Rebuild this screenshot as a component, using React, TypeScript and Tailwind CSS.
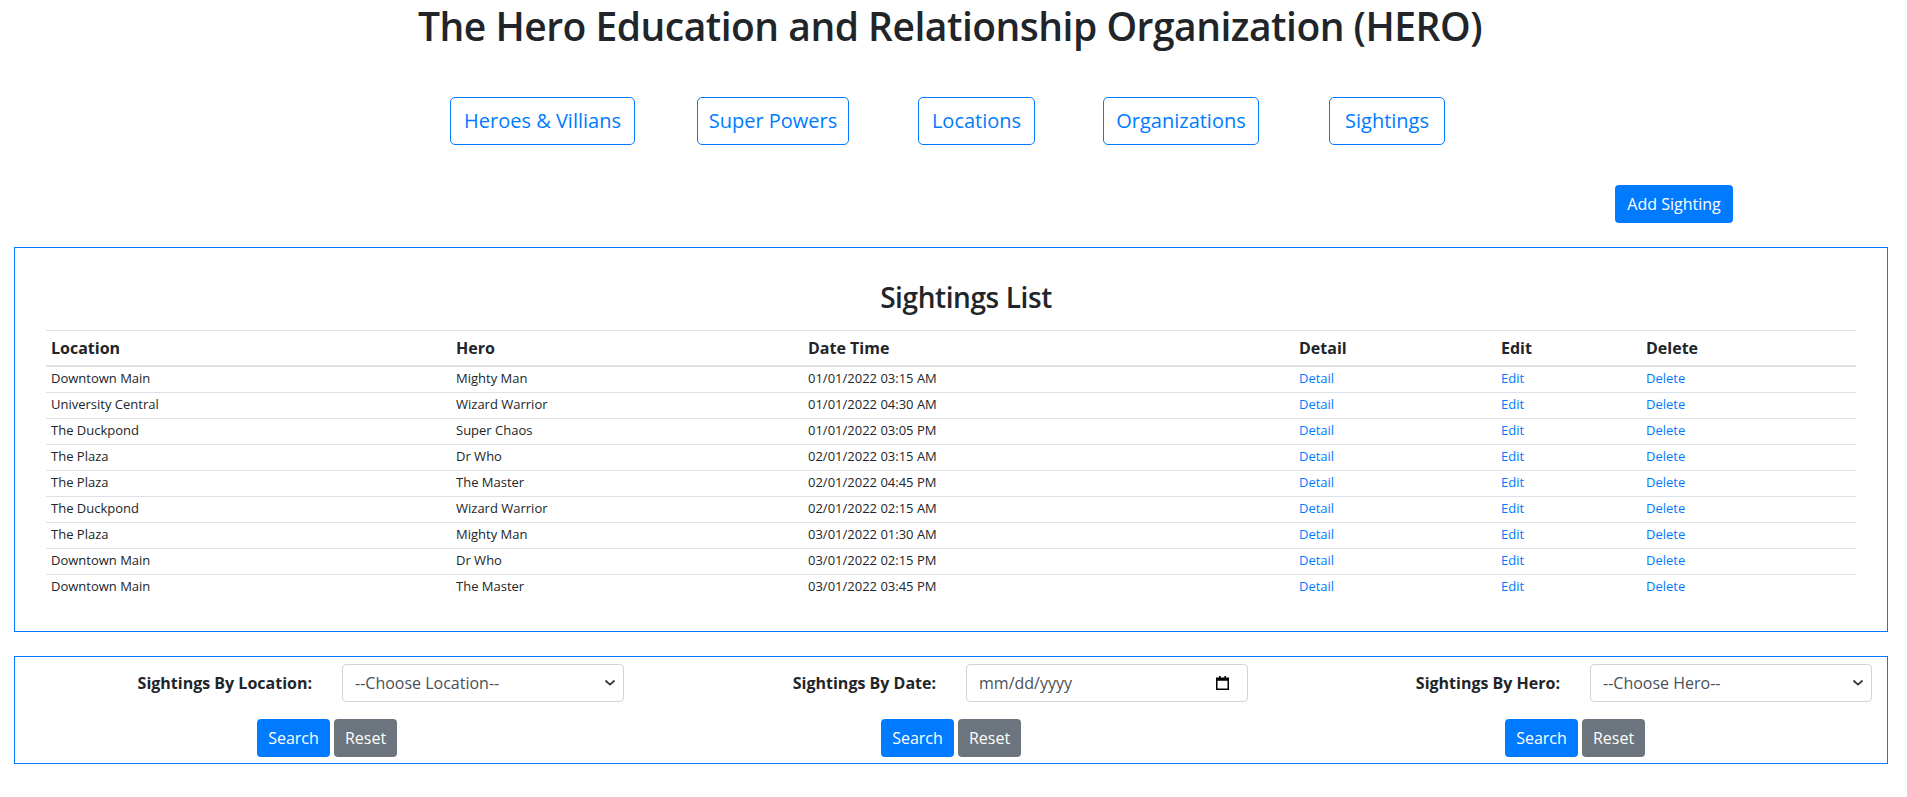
import React from "react";

const rows = [
  ["Downtown Main", "Mighty Man", "01/01/2022 03:15 AM"],
  ["University Central", "Wizard Warrior", "01/01/2022 04:30 AM"],
  ["The Duckpond", "Super Chaos", "01/01/2022 03:05 PM"],
  ["The Plaza", "Dr Who", "02/01/2022 03:15 AM"],
  ["The Plaza", "The Master", "02/01/2022 04:45 PM"],
  ["The Duckpond", "Wizard Warrior", "02/01/2022 02:15 AM"],
  ["The Plaza", "Mighty Man", "03/01/2022 01:30 AM"],
  ["Downtown Main", "Dr Who", "03/01/2022 02:15 PM"],
  ["Downtown Main", "The Master", "03/01/2022 03:45 PM"],
];

function Chevron() {
  return (
    <svg width="10" height="6" viewBox="0 0 10 6" className="pointer-events-none">
      <path d="M1 1l4 3.6L9 1" fill="none" stroke="#343a40" strokeWidth="1.8" strokeLinecap="round" strokeLinejoin="round" />
    </svg>
  );
}

function CalendarIcon() {
  return (
    <svg width="13" height="14" viewBox="0 0 13 14">
      <rect x="3" y="0" width="1.6" height="3" fill="#000" />
      <rect x="8.4" y="0" width="1.6" height="3" fill="#000" />
      <rect x="0.75" y="2.25" width="11.5" height="11" fill="none" stroke="#000" strokeWidth="1.5" />
      <rect x="0.75" y="2.25" width="11.5" height="2.5" fill="#000" />
    </svg>
  );
}

function SelectBox({ text }: { text: string }) {
  return (
    <div className="relative w-full">
      <select className="w-full h-[38px] appearance-none border border-[#ced4da] rounded-[4px] bg-white pl-[12px] pr-[30px] text-[16px] text-[#495057] outline-none">
        <option>{text}</option>
      </select>
      <div className="absolute right-[9px] top-[16px]">
        <Chevron />
      </div>
    </div>
  );
}

function DateBox() {
  return (
    <div className="w-full h-[38px] flex items-center justify-between border border-[#ced4da] rounded-[4px] bg-white pl-[12px] pr-[18px] text-[16px] text-[#495057]">
      <span>mm/dd/yyyy</span>
      <CalendarIcon />
    </div>
  );
}

function FilterCol({ label, children }: { label: string; children: React.ReactNode }) {
  return (
    <div className="flex flex-col">
      <div className="grid grid-cols-2 items-center">
        <div className="px-[15px] text-right font-bold text-[16px] text-[#212529]">{label}</div>
        <div className="px-[15px]">{children}</div>
      </div>
      <div className="flex justify-center mt-[17px]">
        <button className="w-[73px] h-[38px] rounded-[4px] bg-[#007bff] text-white text-[16px]">Search</button>
        <button className="ml-[4px] w-[63px] h-[38px] rounded-[4px] bg-[#6c757d] text-white text-[16px]">Reset</button>
      </div>
    </div>
  );
}

export default function App() {
  const navs: [string, string, string][] = [
    ["Heroes & Villians", "w-[185px]", ""],
    ["Super Powers", "w-[152px]", "ml-[62px]"],
    ["Locations", "w-[117px]", "ml-[69px]"],
    ["Organizations", "w-[156px]", "ml-[68px]"],
    ["Sightings", "w-[116px]", "ml-[70px]"],
  ];
  return (
    <div className="min-h-[797px] bg-white text-[#212529] font-['Open_Sans','Noto_Sans',sans-serif]">
      <h1 className="pt-[2px] pr-[7px] text-center text-[39px] leading-[48px] font-semibold tracking-[-0.5px]">
        The Hero Education and Relationship Organization (HERO)
      </h1>

      <div className="mt-[47px] flex justify-center pr-[12px]">
        {navs.map(([t, w, m]) => (
          <button
            key={t}
            className={`${w} ${m} h-[48px] border border-[#007bff] rounded-[5px] text-[#007bff] text-[20px] leading-[30px] whitespace-nowrap`}
          >
            {t}
          </button>
        ))}
      </div>

      <div className="mt-[40px] flex justify-end pr-[174px]">
        <button className="w-[118px] h-[38px] rounded-[4px] bg-[#007bff] text-white text-[16px]">Add Sighting</button>
      </div>

      <div className="mt-[24px] ml-[14px] mr-[19px] border border-[#007bff] px-[31px] pt-[32px] pb-[31px]">
        <h3 className="pl-[30px] text-center text-[28px] leading-[34px] font-semibold tracking-[-0.4px] mb-[16px]">Sightings List</h3>
        <table className="w-full border-collapse">
          <colgroup>
            <col className="w-[405px]" />
            <col className="w-[352px]" />
            <col className="w-[491px]" />
            <col className="w-[202px]" />
            <col className="w-[145px]" />
            <col className="w-[215px]" />
          </colgroup>
          <thead>
            <tr className="border-t border-[#dee2e6]">
              {["Location", "Hero", "Date Time", "Detail", "Edit", "Delete"].map((h) => (
                <th key={h} className="text-left font-bold text-[16px] leading-[24px] px-[5px] py-[5px] border-b-2 border-[#dee2e6]">
                  {h}
                </th>
              ))}
            </tr>
          </thead>
          <tbody>
            {rows.map((r, i) => (
              <tr key={i} className={i === 0 ? "" : "border-t border-[#dee2e6]"}>
                <td className="px-[5px] pt-[4px] pb-[6px] text-[13px] leading-[15px]">{r[0]}</td>
                <td className="px-[5px] pt-[4px] pb-[6px] text-[13px] leading-[15px]">{r[1]}</td>
                <td className="px-[5px] pt-[4px] pb-[6px] text-[13px] leading-[15px]">{r[2]}</td>
                <td className="px-[5px] pt-[4px] pb-[6px] text-[13px] leading-[15px] text-[#007bff]">Detail</td>
                <td className="px-[5px] pt-[4px] pb-[6px] text-[13px] leading-[15px] text-[#007bff]">Edit</td>
                <td className="px-[5px] pt-[4px] pb-[6px] text-[13px] leading-[15px] text-[#007bff]">Delete</td>
              </tr>
            ))}
          </tbody>
        </table>
      </div>

      <div className="mt-[24px] ml-[14px] mr-[19px] border border-[#007bff] pt-[7px] pb-[6px] grid grid-cols-3">
        <FilterCol label="Sightings By Location:">
          <SelectBox text="--Choose Location--" />
        </FilterCol>
        <FilterCol label="Sightings By Date:">
          <DateBox />
        </FilterCol>
        <FilterCol label="Sightings By Hero:">
          <SelectBox text="--Choose Hero--" />
        </FilterCol>
      </div>
    </div>
  );
}
